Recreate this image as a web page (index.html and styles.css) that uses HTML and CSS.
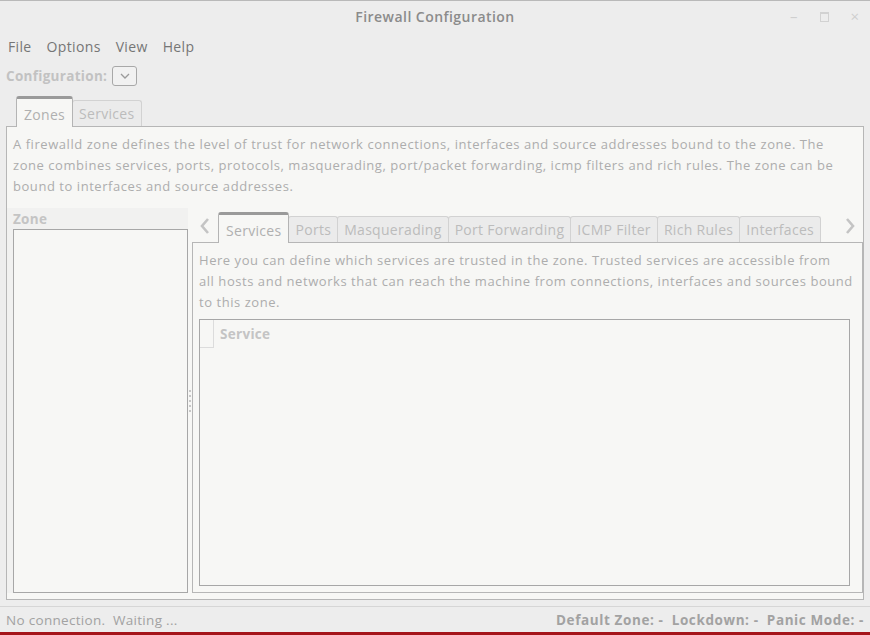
FILE: index.html
```html
<!DOCTYPE html>
<html lang="en">
<head>
    <meta charset="UTF-8">
    <meta name="viewport" content="width=device-width, initial-scale=1.0">
    <title>Firewall Configuration</title>
    <link rel="stylesheet" href="styles.css">
</head>
<body>
    <div class="window">
        <div class="titlebar">
            <span class="title">Firewall Configuration</span>
            <div class="win-buttons">
                <span class="win-btn">&ndash;</span>
                <span class="win-btn max"></span>
                <span class="win-btn">&times;</span>
            </div>
        </div>

        <div class="menubar">
            <span class="menu-item">File</span>
            <span class="menu-item">Options</span>
            <span class="menu-item">View</span>
            <span class="menu-item">Help</span>
        </div>

        <div class="config-row">
            <span class="config-label">Configuration:</span>
            <span class="combo">
                <svg width="10" height="6" viewBox="0 0 10 6"><path d="M1 1 L5 5 L9 1" fill="none" stroke="#9a9a9a" stroke-width="1.3"/></svg>
            </span>
        </div>

        <div class="notebook">
            <div class="tabs">
                <span class="tab active">Zones</span>
                <span class="tab">Services</span>
            </div>
            <div class="page">
                <p class="desc">A firewalld zone defines the level of trust for network connections, interfaces and source addresses bound to the zone. The zone combines services, ports, protocols, masquerading, port/packet forwarding, icmp filters and rich rules. The zone can be bound to interfaces and source addresses.</p>

                <div class="paned">
                    <div class="zone-pane">
                        <div class="pane-title">Zone</div>
                        <div class="tree zone-list"></div>
                    </div>

                    <div class="handle">
                        <span></span><span></span><span></span><span></span><span></span>
                    </div>

                    <div class="detail-pane">
                        <div class="sub-tabs">
                            <span class="arrow">
                                <svg width="10" height="16" viewBox="0 0 10 16"><path d="M8 1 L2 8 L8 15" fill="none" stroke="#c4c4c4" stroke-width="2.6"/></svg>
                            </span>
                            <span class="tab active">Services</span>
                            <span class="tab">Ports</span>
                            <span class="tab">Masquerading</span>
                            <span class="tab">Port Forwarding</span>
                            <span class="tab">ICMP Filter</span>
                            <span class="tab">Rich Rules</span>
                            <span class="tab">Interfaces</span>
                            <span class="arrow right">
                                <svg width="10" height="16" viewBox="0 0 10 16"><path d="M2 1 L8 8 L2 15" fill="none" stroke="#c4c4c4" stroke-width="2.6"/></svg>
                            </span>
                        </div>
                        <div class="sub-page">
                            <p class="desc">Here you can define which services are trusted in the zone. Trusted services are accessible from<br>all hosts and networks that can reach the machine from connections, interfaces and sources bound to this zone.</p>
                            <div class="tree service-list">
                                <div class="tree-header">
                                    <span class="check-col"></span>
                                    <span class="col-title">Service</span>
                                </div>
                            </div>
                        </div>
                    </div>
                </div>
            </div>
        </div>

        <div class="statusbar">
            <span class="status-left">No connection.&nbsp; Waiting ...</span>
            <span class="status-right">Default Zone: - &nbsp;Lockdown: - &nbsp;Panic Mode: -</span>
        </div>
        <div class="desktop-edge"></div>
    </div>
</body>
</html>
```

FILE: styles.css
```css
body {
    margin: 0;
    padding: 0;
    font-family: "Open Sans", "DejaVu Sans", sans-serif;
    font-size: 13px;
    letter-spacing: 0.55px;
    background-color: #ededed;
}
.window {
    width: 870px;
    height: 635px;
    display: flex;
    flex-direction: column;
    background-color: #ededed;
    border-top: 1px solid #b9b9b9;
    box-sizing: border-box;
}
.titlebar {
    height: 31px;
    display: flex;
    align-items: center;
    justify-content: center;
    position: relative;
}
.title {
    font-size: 14px;
    font-weight: 600;
    color: #8b8b8b;
    letter-spacing: 0.45px;
}
.win-buttons {
    position: absolute;
    right: 6px;
    top: 5px;
    display: flex;
    gap: 12px;
}
.win-btn {
    width: 18px;
    text-align: center;
    color: #cfcfcf;
    font-size: 15px;
    line-height: 20px;
}
.win-btn.max {
    width: 7px;
    height: 7px;
    border: 1px solid #d2d2d2;
    border-top-width: 2px;
    margin: 6px 5px 0;
}
.menubar {
    height: 28px;
    display: flex;
    align-items: center;
    padding-left: 1px;
}
.menu-item {
    font-size: 14px;
    color: #767676;
    padding: 0 7px;
    margin-right: 1px;
    letter-spacing: 0.35px;
}
.config-row {
    height: 31px;
    display: flex;
    align-items: center;
    padding-left: 6px;
    gap: 5px;
}
.config-label {
    font-weight: bold;
    color: #c2c2c2;
    font-size: 13.5px;
    letter-spacing: 0.3px;
}
.combo {
    width: 23px;
    height: 18px;
    border: 1px solid #a8a8a8;
    border-radius: 3px;
    display: flex;
    align-items: center;
    justify-content: center;
    background-color: #f1f1f1;
}
.notebook {
    margin: 5px 6px 0;
}
.tabs {
    display: flex;
    align-items: flex-end;
    padding-left: 10px;
    height: 30px;
}
.tab {
    color: #bcbcbc;
    font-size: 14px;
    letter-spacing: 0.3px;
    padding: 0 6px;
    height: 25px;
    line-height: 25px;
    border: 1px solid #d2d2d2;
    border-bottom: none;
    border-radius: 3px 3px 0 0;
    background-color: #ebebeb;
    margin-right: -1px;
}
.tab.active {
    height: 28px;
    line-height: 31px;
    border-color: #b4b4b4;
    border-top: 3px solid #9a9a9a;
    background-color: #f7f7f5;
    color: #b0b0b0;
    position: relative;
    z-index: 1;
    margin-bottom: -1px;
    padding: 0 7px;
}
.tabs .tab {
    letter-spacing: 0.3px;
}
.page {
    border: 1px solid #b6b6b6;
    background-color: #f7f7f5;
    height: 472px;
    display: flex;
    flex-direction: column;
}
.desc {
    margin: 0;
    padding: 7px 10px 0 6px;
    color: #adadad;
    line-height: 21px;
    font-size: 13px;
}
.paned {
    flex: 1;
    display: flex;
    margin-top: 11px;
    padding-bottom: 6px;
}
.zone-pane {
    width: 181px;
    background-color: #f1f1f0;
    display: flex;
    flex-direction: column;
}
.pane-title {
    font-weight: bold;
    color: #c4c4c4;
    font-size: 13.5px;
    letter-spacing: 0.3px;
    padding: 2px 0 0 6px;
    height: 19px;
}
.tree {
    border: 1px solid #a7a7a7;
    background-color: #f7f7f5;
}
.zone-list {
    flex: 1;
    margin-left: 6px;
    margin-right: 0;
}
.handle {
    width: 4px;
    display: flex;
    flex-direction: column;
    justify-content: center;
    align-items: center;
    gap: 3px;
}
.handle span {
    width: 2px;
    height: 2px;
    background-color: #c6c6c6;
}
.detail-pane {
    flex: 1;
    display: flex;
    flex-direction: column;
}
.sub-tabs {
    display: flex;
    align-items: flex-end;
    height: 34px;
}
.arrow {
    width: 26px;
    height: 32px;
    display: flex;
    align-items: center;
    justify-content: center;
}
.arrow.right {
    margin-left: auto;
    width: 26px;
}
.sub-page {
    flex: 1;
    border: 1px solid #b6b6b6;
    background-color: #f7f7f5;
    display: flex;
    flex-direction: column;
}
.sub-page .desc {
    padding-right: 4px;
}
.service-list {
    flex: 1;
    margin: 6px 12px 6px 6px;
}
.tree-header {
    display: flex;
    height: 28px;
    align-items: center;
}
.check-col {
    width: 14px;
    height: 28px;
    border-right: 1px solid #dcdcdc;
    border-bottom: 1px solid #dcdcdc;
    box-sizing: border-box;
}
.col-title {
    font-weight: bold;
    color: #c4c4c4;
    font-size: 13.5px;
    letter-spacing: 0.3px;
    padding-left: 6px;
}
.statusbar {
    margin-top: 6px;
    border-top: 1px solid #d6d6d6;
    height: 25px;
    display: flex;
    align-items: center;
    justify-content: space-between;
    padding: 0 6px;
    color: #a2a2a2;
    font-size: 13.5px;
}
.status-left {
    letter-spacing: 0.3px;
}
.status-right {
    font-weight: bold;
    letter-spacing: 0.6px;
}
.desktop-edge {
    height: 3px;
    margin-top: auto;
    background-color: #a5141a;
}
```
